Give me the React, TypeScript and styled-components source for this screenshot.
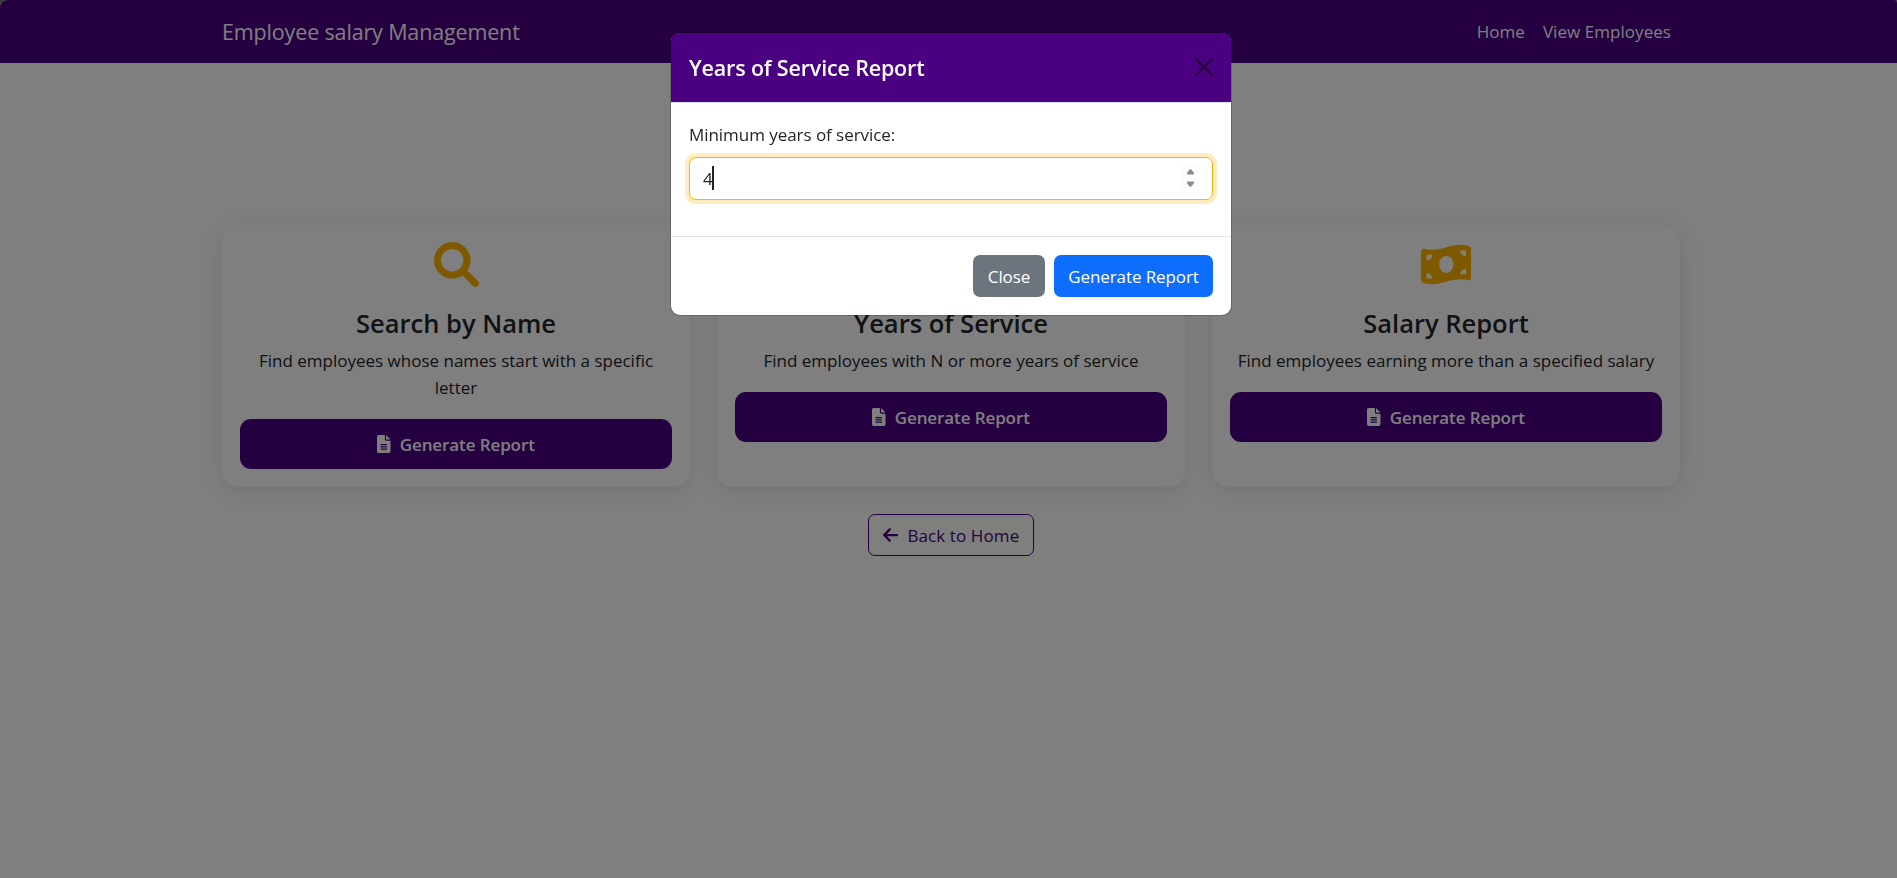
import React from 'react';
import styled, { createGlobalStyle } from 'styled-components';
import { FaBriefcase } from 'react-icons/fa6';

const indigo = '#4b0082';
const amber = '#ffb300';

const GlobalStyle = createGlobalStyle`
  *, *::before, *::after { box-sizing: border-box; }
  html { background: #747a76; }
  body {
    margin: 0;
    overflow: hidden;
    color: #212529;
    font-family: 'Open Sans', 'Noto Sans', sans-serif;
    font-size: 17px;
    line-height: 27px;
  }
  h2, h4, p { margin: 0; }
  button { font-family: inherit; cursor: pointer; }
`;

const Page = styled.div`
  height: 878px;
  background: #fffefa;
  border-radius: 8px 3px 0 0;
  overflow: hidden;
`;

const Navbar = styled.nav`
  height: 63px;
  padding-left: 5px;
  background: ${indigo};
`;

const Container = styled.div`
  width: 1458px;
  margin: 0 auto;
`;

const NavInner = styled(Container)`
  height: 100%;
  display: flex;
  align-items: center;
  justify-content: space-between;
  color: #fff;
`;

const Brand = styled.a`
  padding-bottom: 1px;
  font-size: 21.5px;
  letter-spacing: -0.15px;
`;

const NavLinks = styled.div`
  display: flex;
  gap: 18px;
  padding: 0 9px 1px 0;
`;

const NavLink = styled.a`
  letter-spacing: 0.05px;
`;

const Main = styled.main`
  padding: 162px 0 0 5px;
`;

const CardGrid = styled(Container)`
  display: grid;
  grid-template-columns: repeat(3, 468px);
  column-gap: 27px;
`;

const Card = styled.section`
  display: flex;
  flex-direction: column;
  align-items: center;
  height: 262px;
  padding: 17px 18px;
  border-radius: 17px;
  background: #fff;
  box-shadow: 0 4px 22px rgba(0, 0, 0, 0.1);
  text-align: center;
`;

const Icon = styled.svg`
  display: block;
  height: 1em;
  fill: currentColor;
`;

const CardIcon = styled.div`
  height: 64px;
  color: ${amber};
  font-size: 45px;
  svg { display: block; }
`;

const CardTitle = styled.h4`
  height: 33px;
  margin-bottom: 8px;
  font-size: 25.5px;
  font-weight: 600;
  line-height: 34px;
`;

const CardText = styled.p`
  margin-bottom: 18px;
`;

const ReportButton = styled.button`
  display: flex;
  align-items: center;
  justify-content: center;
  gap: 9px;
  width: 100%;
  height: 50px;
  flex: none;
  padding: 0;
  border: 0;
  border-radius: 11px;
  background: ${indigo};
  color: #fff;
  font-size: 17px;
  font-weight: 600;
  letter-spacing: -0.1px;
  svg { font-size: 18px; }
`;

const Actions = styled(Container)`
  display: flex;
  justify-content: center;
  margin-top: 27px;
`;

const BackButton = styled.button`
  display: flex;
  align-items: center;
  justify-content: center;
  gap: 9px;
  width: 166px;
  height: 42px;
  padding: 0;
  border: 1px solid ${indigo};
  border-radius: 7px;
  background: transparent;
  color: ${indigo};
  font-size: 17px;
  letter-spacing: 0.1px;
  svg { font-size: 18px; }
`;

const Backdrop = styled.div`
  position: fixed;
  inset: 0;
  padding: 32px 0 0 5px;
  background: rgba(0, 0, 0, 0.5);
`;

const Dialog = styled.div`
  width: 562px;
  margin: 0 auto;
  border: 1px solid rgba(0, 0, 0, 0.175);
  border-radius: 10px;
  background: #fff;
  background-clip: padding-box;
`;

const DialogHeader = styled.header`
  display: flex;
  align-items: center;
  justify-content: space-between;
  height: 70px;
  padding: 0 18px;
  border-bottom: 1px solid #dee2e6;
  border-radius: 8px 8px 0 0;
  background: ${indigo};
  background-clip: padding-box;
  color: #fff;
`;

const DialogTitle = styled.h2`
  font-size: 21.5px;
  font-weight: 600;
  letter-spacing: -0.17px;
`;

const CloseIcon = styled.svg`
  width: 18px;
  height: 18px;
  margin-bottom: 1px;
  opacity: 0.5;
`;

const DialogBody = styled.div`
  height: 133px;
  padding: 18px 18px 0;
`;

const Label = styled.label`
  display: block;
  margin-bottom: 9px;
  letter-spacing: -0.05px;
`;

const NumberField = styled.div`
  display: flex;
  align-items: center;
  height: 43px;
  padding: 0 13px 1px;
  border: 1px solid ${amber};
  border-radius: 7px;
  box-shadow: 0 0 0 4px rgba(255, 179, 0, 0.25);
`;

const Caret = styled.span`
  width: 2px;
  height: 24px;
  margin-left: -1px;
  background: #212529;
`;

const Spinner = styled.svg`
  width: 17px;
  height: 26px;
  margin-left: auto;
  background: #fcfcfc;
`;

const DialogFooter = styled.footer`
  display: flex;
  justify-content: flex-end;
  gap: 9px;
  height: 79px;
  padding: 18px 18px 0;
  border-top: 1px solid #dee2e6;
`;

const DialogButton = styled.button<{ $bg: string; $width: number }>`
  width: ${(p) => p.$width}px;
  height: 42px;
  padding: 0;
  border: 0;
  border-radius: 7px;
  background: ${(p) => p.$bg};
  color: #fff;
  font-size: 17px;
  letter-spacing: -0.1px;
`;

const SearchIcon = () => (
  <Icon viewBox="0 0 512 512">
    <path d="M500.3 443.7l-119.7-119.7c27.22-40.41 40.65-90.9 33.46-144.7C401.8 87.79 326.8 13.32 235.2 1.723C99.01-15.51-15.51 99.01 1.724 235.2c11.6 91.64 86.08 166.7 177.6 178.9c53.8 7.189 104.3-6.236 144.7-33.46l119.7 119.7c15.62 15.62 40.95 15.62 56.57 0C515.9 484.7 515.9 459.3 500.3 443.7zM79.1 208c0-70.58 57.42-128 128-128s128 57.42 128 128c0 70.58-57.42 128-128 128S79.1 278.6 79.1 208z" />
  </Icon>
);

const MoneyIcon = () => (
  <Icon viewBox="0 0 576 512" fillRule="evenodd">
    <path d="M48.66 79.13C128.4 100.9 208.2 80.59 288 60.25C375 38.08 462 15.9 549 48.38C565.9 54.69 576 71.62 576 89.66V399.5C576 423.4 550.4 439.2 527.3 432.9C447.6 411.1 367.8 431.4 288 451.7C200.1 473.9 113.1 496.1 26.97 463.6C10.06 457.3 0 440.4 0 422.3V112.5C0 88.59 25.61 72.83 48.66 79.13zM288 352C332.2 352 368 309 368 256C368 202.1 332.2 160 288 160C243.8 160 208 202.1 208 256C208 309 243.8 352 288 352zM64 416H128C128 380.7 99.35 352 64 352V416zM64 144V208C99.35 208 128 179.3 128 144H64zM512 304C476.7 304 448 332.7 448 368H512V304zM448 96C448 131.3 476.7 160 512 160V96H448z" />
  </Icon>
);

const FileIcon = () => (
  <Icon viewBox="0 0 384 512">
    <path d="M256 0v128h128L256 0zM224 128L224 0H48C21.49 0 0 21.49 0 48v416C0 490.5 21.49 512 48 512h288c26.51 0 48-21.49 48-48V160h-127.1C238.3 160 224 145.7 224 128zM272 416h-160C103.2 416 96 408.8 96 400C96 391.2 103.2 384 112 384h160c8.836 0 16 7.162 16 16C288 408.8 280.8 416 272 416zM272 352h-160C103.2 352 96 344.8 96 336C96 327.2 103.2 320 112 320h160c8.836 0 16 7.162 16 16C288 344.8 280.8 352 272 352zM288 272C288 280.8 280.8 288 272 288h-160C103.2 288 96 280.8 96 272C96 263.2 103.2 256 112 256h160C280.8 256 288 263.2 288 272z" />
  </Icon>
);

const ArrowIcon = () => (
  <Icon viewBox="0 0 448 512">
    <path d="M447.1 256C447.1 273.7 432.8 288 415.1 288H109.3l105.4 105.4c12.5 12.5 12.5 32.75 0 45.25C208.4 444.9 200.2 448 192 448s-16.38-3.125-22.62-9.375l-160-160c-12.5-12.5-12.5-32.75 0-45.25l160-160c12.5-12.5 32.75-12.5 45.25 0s12.5 32.75 0 45.25L109.3 224H416C433.7 224 447.1 238.3 447.1 256z" />
  </Icon>
);

const reports = [
  {
    icon: <SearchIcon />,
    title: 'Search by Name',
    text: 'Find employees whose names start with a specific letter',
  },
  {
    icon: <FaBriefcase />,
    title: 'Years of Service',
    text: 'Find employees with N or more years of service',
  },
  {
    icon: <MoneyIcon />,
    title: 'Salary Report',
    text: 'Find employees earning more than a specified salary',
  },
];

export default function App() {
  return (
    <>
      <GlobalStyle />
      <Page>
        <Navbar>
          <NavInner>
            <Brand>Employee salary Management</Brand>
            <NavLinks>
              <NavLink>Home</NavLink>
              <NavLink>View Employees</NavLink>
            </NavLinks>
          </NavInner>
        </Navbar>
        <Main>
          <CardGrid>
            {reports.map((report) => (
              <Card key={report.title}>
                <CardIcon>{report.icon}</CardIcon>
                <CardTitle>{report.title}</CardTitle>
                <CardText>{report.text}</CardText>
                <ReportButton>
                  <FileIcon />
                  <span>Generate Report</span>
                </ReportButton>
              </Card>
            ))}
          </CardGrid>
          <Actions>
            <BackButton>
              <ArrowIcon />
              <span>Back to Home</span>
            </BackButton>
          </Actions>
        </Main>
      </Page>
      <Backdrop>
        <Dialog role="dialog">
          <DialogHeader>
            <DialogTitle>Years of Service Report</DialogTitle>
            <CloseIcon viewBox="0 0 16 16">
              <path d="M.293.293a1 1 0 0 1 1.414 0L8 6.586 14.293.293a1 1 0 1 1 1.414 1.414L9.414 8l6.293 6.293a1 1 0 0 1-1.414 1.414L8 9.414l-6.293 6.293a1 1 0 0 1-1.414-1.414L6.586 8 .293 1.707a1 1 0 0 1 0-1.414z" />
            </CloseIcon>
          </DialogHeader>
          <DialogBody>
            <Label>Minimum years of service:</Label>
            <NumberField>
              <span>4</span>
              <Caret />
              <Spinner viewBox="0 0 17 26" fill="#8b8b8b">
                <path d="M5 9.5V8L7.5 4.5h2L12 8v1.5z" />
                <path d="M5 16.5V18l2.5 3.5h2L12 18v-1.5z" />
              </Spinner>
            </NumberField>
          </DialogBody>
          <DialogFooter>
            <DialogButton $bg="#6c757d" $width={72}>Close</DialogButton>
            <DialogButton $bg="#0d6efd" $width={159}>Generate Report</DialogButton>
          </DialogFooter>
        </Dialog>
      </Backdrop>
    </>
  );
}
